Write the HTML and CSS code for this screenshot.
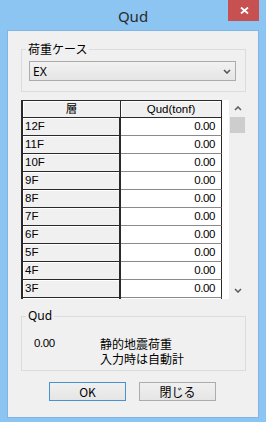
FILE: index.html
```html
<!DOCTYPE html>
<html lang="ja">

<head>
    <meta charset="UTF-8">
    <meta name="viewport" content="width=device-width, initial-scale=1.0">
    <title>Qud</title>
    <link rel="stylesheet" href="styles.css">
</head>

<body>
    <div class="window">
        <div class="titlebar">
            <span class="title">Qud</span>
            <button class="close" aria-label="close">
                <svg width="9" height="7" viewBox="0 0 9 7">
                    <path d="M1 0.5 L8 6.5 M8 0.5 L1 6.5" stroke="#fff" stroke-width="1.8" fill="none" />
                </svg>
            </button>
        </div>

        <div class="client">
            <fieldset class="group group-case">
                <legend>荷重ケース</legend>
                <div class="combo">
                    <span>EX</span>
                    <svg width="8" height="5" viewBox="0 0 8 5">
                        <path d="M1 1 L4 4 L7 1" stroke="#555" stroke-width="1.6" fill="none" />
                    </svg>
                </div>
            </fieldset>

            <div class="gridview">
                <div class="cells">
                    <div class="head corner">層</div>
                    <div class="head">Qud(tonf)</div>

                    <div class="rowhead">12F</div><div class="cell">0.00</div>
                    <div class="rowhead">11F</div><div class="cell">0.00</div>
                    <div class="rowhead">10F</div><div class="cell">0.00</div>
                    <div class="rowhead">9F</div><div class="cell">0.00</div>
                    <div class="rowhead">8F</div><div class="cell">0.00</div>
                    <div class="rowhead">7F</div><div class="cell">0.00</div>
                    <div class="rowhead">6F</div><div class="cell">0.00</div>
                    <div class="rowhead">5F</div><div class="cell">0.00</div>
                    <div class="rowhead">4F</div><div class="cell">0.00</div>
                    <div class="rowhead">3F</div><div class="cell">0.00</div>
                    <div class="rowhead empty"></div><div class="cell empty"></div>
                </div>

                <!-- vertical scrollbar -->
                <div class="vscroll">
                    <span class="arrow">
                        <svg width="8" height="5" viewBox="0 0 8 5">
                            <path d="M1 4 L4 1 L7 4" stroke="#606060" stroke-width="1.6" fill="none" />
                        </svg>
                    </span>
                    <span class="thumb"></span>
                    <span class="track"></span>
                    <span class="arrow">
                        <svg width="8" height="5" viewBox="0 0 8 5">
                            <path d="M1 1 L4 4 L7 1" stroke="#606060" stroke-width="1.6" fill="none" />
                        </svg>
                    </span>
                </div>
            </div>

            <fieldset class="group group-qud">
                <legend>Qud</legend>
                <div class="qud-info">
                    <span class="num">0.00</span><span>静的地震荷重</span>
                    <span></span><span>入力時は自動計</span>
                </div>
            </fieldset>

            <div class="buttons">
                <button class="btn default">OK</button>
                <button class="btn">閉じる</button>
            </div>
        </div>
    </div>
</body>

</html>
```

FILE: styles.css
```css
* {
    box-sizing: border-box;
}

body {
    margin: 0;
    font-family: "Noto Sans CJK JP", sans-serif;
    color: #000;
}

.window {
    width: 266px;
    height: 422px;
    background: #8cc4f2;
    display: flex;
    flex-direction: column;
}

/* title bar */
.titlebar {
    height: 31px;
    position: relative;
    display: flex;
    align-items: center;
    justify-content: center;
}

.title {
    font: 15px "Noto Sans", sans-serif;
    color: #2b2b2b;
    line-height: 1;
    margin-top: 1px;
}

.close {
    position: absolute;
    top: 0;
    right: 7px;
    width: 31px;
    height: 21px;
    padding: 0 0 0 2px;
    border: 0;
    background: #c75050;
    display: flex;
    align-items: center;
    justify-content: center;
}

.client {
    flex: 1;
    margin: 0 8px 5px;
    background: #f0f0f0;
    display: flex;
    flex-direction: column;
    box-shadow: 0 0 0 1px #7fb6e6;
}

/* group boxes */
.group {
    margin: 10px 12px 0 13px;
    border: 1px solid #dcdcdc;
    min-width: 0;
}

.group legend {
    font-size: 12px;
    line-height: 16px;
    padding: 0 2px;
}

.group-case {
    padding: 4px 9px 10px 7px;
}

.group-case legend {
    margin-left: -3px;
}

.combo {
    width: 207px;
    height: 20px;
    border: 1px solid #acacac;
    background: linear-gradient(#f2f2f2, #e5e5e5);
    display: flex;
    align-items: center;
    justify-content: space-between;
    padding: 0 4px 0 3px;
    font: 12px "Noto Sans", sans-serif;
}

/* data grid */
.gridview {
    margin: 8px 12px 0 13px;
    height: 199px;
    display: flex;
}

.cells {
    width: 208px;
    background: #fff;
    overflow: hidden;
    display: grid;
    grid-template-columns: 100px 101px;
    grid-auto-rows: 18px;
    align-content: start;
    font: 11.5px "Liberation Sans", "Noto Sans CJK JP", sans-serif;
    line-height: 16px;
}

.head {
    background: #f0f0f0;
    border-top: 1px solid #2a2a2a;
    border-right: 1px solid #2a2a2a;
    border-bottom: 1px solid #2a2a2a;
    box-shadow: inset 1px 1px 0 #fff;
    text-align: center;
}

.head.corner {
    border-left: 2px solid #2a2a2a;
}

.rowhead {
    background: #f0f0f0;
    border-left: 2px solid #2a2a2a;
    border-right: 2px solid #2a2a2a;
    border-bottom: 1px solid #2a2a2a;
    box-shadow: inset 1px 1px 0 #fff;
    padding-left: 2px;
    line-height: 17px;
}

.cell {
    border-right: 1px solid #2a2a2a;
    border-bottom: 1px solid #8a8a8a;
    text-align: right;
    padding-right: 6px;
    line-height: 17px;
    letter-spacing: -0.4px;
}

.vscroll {
    width: 17px;
    background: #f0f0f0;
    display: flex;
    flex-direction: column;
}

.vscroll .arrow {
    height: 17px;
    display: flex;
    align-items: center;
    justify-content: center;
}

.vscroll .thumb {
    height: 16px;
    margin: 0 1px;
    background: #cdcdcd;
}

.vscroll .track {
    flex: 1;
}

/* Qud group */
.group-qud {
    margin-top: 9px;
    padding: 12px 9px 4px 12px;
}

.group-qud legend {
    margin-left: -8px;
    font-family: "Noto Sans", sans-serif;
}

.qud-info {
    display: grid;
    grid-template-columns: 66px auto;
    font-size: 12px;
    line-height: 15px;
}

.qud-info .num {
    font: 11.5px "Liberation Sans", sans-serif;
    line-height: 15px;
    letter-spacing: -0.4px;
}

/* buttons */
.buttons {
    display: flex;
    gap: 13px;
    margin: 11px 0 0 41px;
}

.btn {
    width: 77px;
    height: 19px;
    padding: 0;
    border: 1px solid #acacac;
    background: linear-gradient(#f0f0f0, #e5e5e5);
    font: 12px "Noto Sans CJK JP", sans-serif;
    line-height: 17px;
    color: #000;
}

.btn.default {
    border-color: #4a92cf;
}
```
